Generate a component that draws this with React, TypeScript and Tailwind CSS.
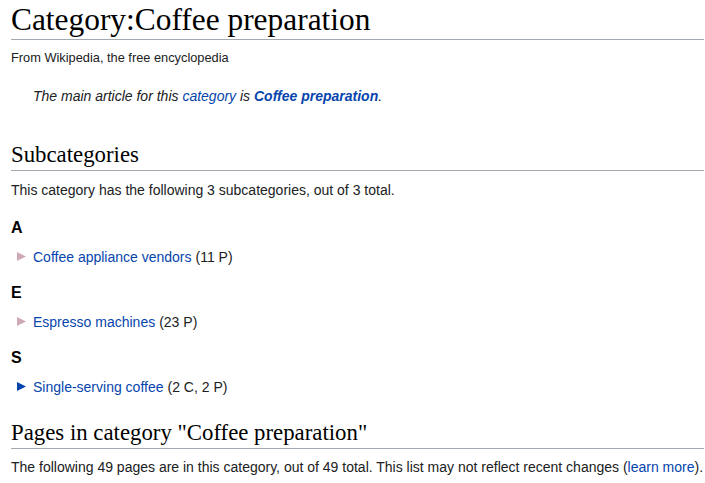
import React from "react";

const serif = { fontFamily: '"Liberation Serif", "Times New Roman", serif' };

function Item({ label, count, empty }: { label: string; count: string; empty: boolean }) {
  return (
    <div className="flex items-center h-[20px] leading-[20px] mt-[7px]">
      <svg width="9" height="9" viewBox="0 0 9 9" className="ml-[6px] shrink-0">
        <path d="M0 0 L9 4.5 L0 9 Z" fill={empty ? "#cfa9b3" : "#0645ad"} />
      </svg>
      <span className="ml-[7px] text-[#0645ad]">{label}</span>
      <span className="ml-[4px]">{count}</span>
    </div>
  );
}

function Letter({ children }: { children: React.ReactNode }) {
  return <h3 className="font-bold text-[16px] leading-[24px] mt-[14px] text-black">{children}</h3>;
}

export default function App() {
  return (
    <div
      className="w-[705px] h-[483px] overflow-hidden bg-white text-[#202122] pl-[11px] pr-[1px]"
      style={{ fontFamily: '"Liberation Sans", Arial, sans-serif' }}
    >
      <h1
        className="text-[31.4px] leading-[39px] border-b border-[#a2a9b1] text-black"
        style={serif}
      >
        Category:Coffee preparation
      </h1>
      <div className="text-[12.8px] mt-[9px] leading-[1.4]">From Wikipedia, the free encyclopedia</div>
      <div className="text-[14px] italic mt-[18px] pl-[22px] leading-[22.4px]">
        The main article for this <span className="text-[#0645ad]">category</span> is{" "}
        <span className="text-[#0645ad] font-bold">Coffee preparation</span>.
      </div>

      <h2
        className="text-[22.8px] leading-[30px] mt-[33px] border-b border-[#a2a9b1] text-black"
        style={serif}
      >
        Subcategories
      </h2>
      <div className="text-[14px] mt-[8px] leading-[22.4px]">
        This category has the following 3 subcategories, out of 3 total.
      </div>

      <div className="text-[14px]">
        <Letter>A</Letter>
        <Item label="Coffee appliance vendors" count="(11 P)" empty />
        <Letter>E</Letter>
        <Item label="Espresso machines" count="(23 P)" empty />
        <Letter>S</Letter>
        <Item label="Single-serving coffee" count="(2 C, 2 P)" empty={false} />
      </div>

      <h2
        className="text-[22.8px] leading-[30px] mt-[21px] border-b border-[#a2a9b1] text-black"
        style={serif}
      >
        Pages in category "Coffee preparation"
      </h2>
      <div className="text-[14px] mt-[7px] leading-[22.4px] whitespace-nowrap">
        The following 49 pages are in this category, out of 49 total. This list may not reflect recent
        changes (<span className="text-[#0645ad]">learn more</span>).
      </div>
    </div>
  );
}
